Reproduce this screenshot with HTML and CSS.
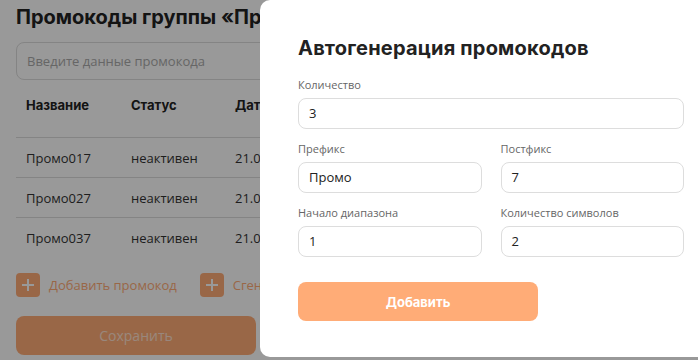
FILE: index.html
```html
<!DOCTYPE html>
<html lang="ru">
<head>
<meta charset="utf-8">
<title>Промокоды</title>
<link rel="stylesheet" href="styles.css">
</head>
<body>
<div class="page">
  <h1 class="page-title">Промокоды группы «Промо»</h1>
  <div class="search">Введите данные промокода</div>
  <table class="codes">
    <thead>
      <tr><th class="c1">Название</th><th class="c2">Статус</th><th class="c3">Дата</th><th></th></tr>
    </thead>
    <tbody>
      <tr><td>Промо017</td><td>неактивен</td><td>21.06.23</td><td></td></tr>
      <tr><td>Промо027</td><td>неактивен</td><td>21.06.23</td><td></td></tr>
      <tr><td>Промо037</td><td>неактивен</td><td>21.06.23</td><td></td></tr>
    </tbody>
  </table>
  <div class="actions">
    <div class="action"><span class="plus"></span><span>Добавить промокод</span></div>
    <div class="action"><span class="plus"></span><span>Сгенерировать</span></div>
  </div>
  <button class="save">Сохранить</button>
</div>
<div class="overlay"></div>
<div class="modal">
  <h2 class="modal-title">Автогенерация промокодов</h2>
  <div class="field">
    <label class="label">Количество</label>
    <div class="input">3</div>
  </div>
  <div class="row">
    <div class="field">
      <label class="label">Префикс</label>
      <div class="input">Промо</div>
    </div>
    <div class="field">
      <label class="label">Постфикс</label>
      <div class="input">7</div>
    </div>
  </div>
  <div class="row">
    <div class="field">
      <label class="label">Начало диапазона</label>
      <div class="input">1</div>
    </div>
    <div class="field">
      <label class="label">Количество символов</label>
      <div class="input">2</div>
    </div>
  </div>
  <button class="submit">Добавить</button>
</div>
</body>
</html>
```

FILE: styles.css
```css
* { box-sizing: border-box; }
html, body { margin: 0; padding: 0; background: #fff; }
body {
  font-family: "Open Sans", "Liberation Sans", sans-serif;
  color: #333;
  width: 698px;
  height: 360px;
  overflow: hidden;
}
.page {
  padding: 4px 16px 0;
  width: 698px;
}
.page-title {
  margin: 0;
  font-family: "Inter", "DejaVu Sans", sans-serif;
  font-weight: 700;
  font-size: 20px;
  line-height: 26px;
  color: #222;
  white-space: nowrap;
}
.search {
  margin-top: 12px;
  width: 666px;
  height: 38px;
  border: 1px solid #ddd;
  border-radius: 8px;
  padding: 0 10px;
  font-size: 13px;
  line-height: 36px;
  color: #aaa;
}
.codes {
  border-collapse: collapse;
  font-size: 13px;
  width: 666px;
}
.codes th {
  text-align: left;
  font-family: "Inter", "DejaVu Sans", sans-serif;
  font-weight: 700;
  font-size: 13px;
  line-height: 18px;
  padding: 16px 10px 23px;
  color: #222;
  border-bottom: 1px solid #ddd;
}
.codes th.c1 { width: 105px; }
.codes th.c2 { width: 104px; }
.codes th.c3 { width: 160px; }
.codes td {
  padding: 0 10px;
  height: 40px;
  line-height: 18px;
  color: #333;
}
.codes tbody tr + tr td { border-top: 1px solid #ddd; }
.actions {
  display: flex;
  gap: 23px;
  margin-top: 15px;
}
.action {
  display: flex;
  align-items: center;
  gap: 9px;
  font-size: 13px;
  color: #ffac77;
  white-space: nowrap;
}
.plus {
  width: 24px;
  height: 24px;
  border-radius: 4px;
  background: #ffac77;
  position: relative;
  flex: none;
}
.plus::before, .plus::after {
  content: "";
  position: absolute;
  background: #fff;
  left: 50%;
  top: 50%;
  transform: translate(-50%, -50%);
}
.plus::before { width: 12px; height: 2px; }
.plus::after { width: 2px; height: 12px; }
.save {
  display: block;
  margin-top: 19px;
  width: 240px;
  height: 39px;
  border: 0;
  border-radius: 8px;
  background: #ffac77;
  color: #ffe2d0;
  font-family: "Open Sans", sans-serif;
  font-size: 14px;
}
.overlay {
  position: fixed;
  inset: 0;
  background: rgba(0, 0, 0, 0.4);
}
.modal {
  position: fixed;
  left: 260px;
  top: 0;
  width: 480px;
  height: 357px;
  background: #fff;
  border-radius: 10px;
  padding: 35px 56px 0 38px;
}
.modal-title {
  margin: 0 0 16px;
  font-family: "Inter", "DejaVu Sans", sans-serif;
  font-weight: 700;
  font-size: 20px;
  line-height: 26px;
  color: #222;
  letter-spacing: 0.2px;
}
.row {
  display: grid;
  grid-template-columns: 1fr 1fr;
  gap: 19px;
}
.field { margin-bottom: 12px; }
.label {
  display: block;
  font-size: 11px;
  line-height: 15px;
  color: #666;
  margin-bottom: 6px;
}
.input {
  height: 31px;
  border: 1px solid #ddd;
  border-radius: 8px;
  padding: 0 10px;
  font-size: 13px;
  line-height: 29px;
  color: #222;
}
.row:last-of-type .field { margin-bottom: 0; }
.submit {
  display: block;
  margin-top: 25px;
  width: 240px;
  height: 39px;
  border: 0;
  border-radius: 8px;
  background: #ffac77;
  color: #fff;
  font-family: "Inter", "DejaVu Sans", sans-serif;
  font-weight: 700;
  font-size: 13px;
}
```
